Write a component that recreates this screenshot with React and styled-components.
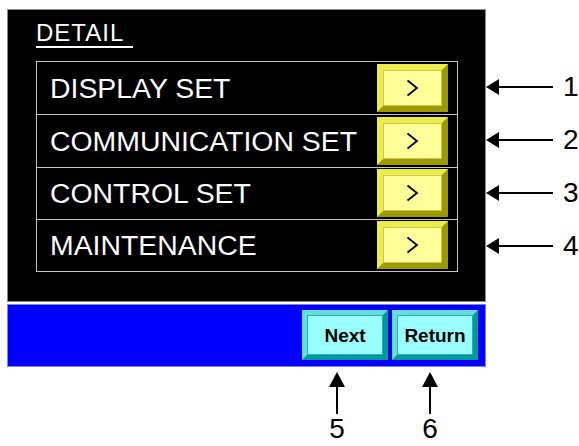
import React from "react";
import styled, { createGlobalStyle } from "styled-components";

const Global = createGlobalStyle`
  html, body {
    margin: 0;
    padding: 0;
    background: #ffffff;
    overflow: hidden;
  }
  body {
    font-family: "Liberation Sans", Arial, sans-serif;
  }
`;

const Page = styled.div`
  padding: 9px 0 0 7px;
  width: 579px;
  height: 446px;
  box-sizing: border-box;
`;

const Top = styled.div`
  display: flex;
  align-items: flex-start;
`;

const Device = styled.div`
  width: 479px;
  display: flex;
  flex-direction: column;
`;

const Screen = styled.div`
  width: 479px;
  height: 293px;
  box-sizing: border-box;
  border: 1px solid #8a8a8a;
  background: #000000;
  padding: 11px 0 0 28px;
`;

const TitleWrap = styled.div`
  display: block;
`;

const Title = styled.span`
  display: inline-block;
  color: #ffffff;
  font-size: 24px;
  line-height: 24px;
  letter-spacing: 1px;
  padding: 0 9px 1px 0;
  border-bottom: 2px solid #ffffff;
`;

const Menu = styled.div`
  margin-top: 13px;
  width: 422px;
  height: 211px;
  box-sizing: border-box;
  border: 1px solid #c4c4c4;
  display: grid;
  grid-template-rows: repeat(4, 1fr);
`;

const Row = styled.div`
  display: flex;
  align-items: center;
  justify-content: space-between;
  padding: 0 9px 0 13px;
  & + & {
    border-top: 1px solid #c4c4c4;
  }
`;

const Label = styled.span`
  color: #ffffff;
  font-size: 28.4px;
  line-height: 28px;
  white-space: nowrap;
`;

const ArrowButton = styled.div`
  width: 71px;
  height: 48px;
  box-sizing: border-box;
  border: 6px solid;
  border-color: #ecec4c #9c9a00 #9c9a00 #ecec4c;
  background: #ffff99;
  box-shadow: inset 0 0 0 1px #c9c950;
  display: flex;
  align-items: center;
  justify-content: center;
`;

const Bar = styled.div`
  margin-top: 2px;
  width: 479px;
  height: 63px;
  box-sizing: border-box;
  border: 1px solid #8080ff;
  background: #0000ff;
  display: flex;
  justify-content: flex-end;
  align-items: flex-start;
  gap: 4px;
  padding: 5px 7px 0 0;
`;

const NavButton = styled.div`
  width: 86px;
  height: 50px;
  box-sizing: border-box;
  border: 5px solid;
  border-color: #66dcdc #009999 #009999 #66dcdc;
  background: #99ffff;
  box-shadow: inset 0 0 0 1px #2fb0b0;
  display: flex;
  align-items: center;
  justify-content: center;
  color: #000000;
  font-weight: bold;
  font-size: 19px;
  line-height: 19px;
`;

const SideNotes = styled.div`
  padding-top: 52px;
  display: flex;
  flex-direction: column;
`;

const SideNote = styled.div`
  height: 52.75px;
  display: flex;
  align-items: center;
`;

const Num = styled.span`
  color: #000000;
  font-size: 28px;
  line-height: 28px;
  margin-left: ${(p) => p.$gap || 0}px;
`;

const BottomNotes = styled.div`
  display: flex;
  padding-left: 315px;
  gap: 63px;
  margin-top: 5px;
`;

const BottomNote = styled.div`
  width: 30px;
  display: flex;
  flex-direction: column;
  align-items: center;
`;

const BottomNum = styled(Num)`
  margin-top: 4px;
  line-height: 22px;
`;

const Chevron = () => (
  <svg width="13" height="18" viewBox="0 0 13 18">
    <polyline
      points="1.5,1.5 11,9 1.5,16.5"
      fill="none"
      stroke="#000"
      strokeWidth="1.8"
    />
  </svg>
);

const LeftArrow = () => (
  <svg width="67" height="16" viewBox="0 0 67 16">
    <polygon points="0,8 13,0 13,16" fill="#000" />
    <line x1="12" y1="8" x2="67" y2="8" stroke="#000" strokeWidth="2" />
  </svg>
);

const UpArrow = () => (
  <svg width="16" height="42" viewBox="0 0 16 42">
    <polygon points="8,0 0,15 16,15" fill="#000" />
    <line x1="8" y1="14" x2="8" y2="42" stroke="#000" strokeWidth="2" />
  </svg>
);

const items = ["DISPLAY SET", "COMMUNICATION SET", "CONTROL SET", "MAINTENANCE"];

export default function App() {
  return (
    <>
      <Global />
      <Page>
        <Top>
          <Device>
            <Screen>
              <TitleWrap>
                <Title>DETAIL</Title>
              </TitleWrap>
              <Menu>
                {items.map((t) => (
                  <Row key={t}>
                    <Label>{t}</Label>
                    <ArrowButton>
                      <Chevron />
                    </ArrowButton>
                  </Row>
                ))}
              </Menu>
            </Screen>
            <Bar>
              <NavButton>Next</NavButton>
              <NavButton>Return</NavButton>
            </Bar>
          </Device>
          <SideNotes>
            {[1, 2, 3, 4].map((n) => (
              <SideNote key={n}>
                <LeftArrow />
                <Num $gap={10}>{n}</Num>
              </SideNote>
            ))}
          </SideNotes>
        </Top>
        <BottomNotes>
          {[5, 6].map((n) => (
            <BottomNote key={n}>
              <UpArrow />
              <BottomNum>{n}</BottomNum>
            </BottomNote>
          ))}
        </BottomNotes>
      </Page>
    </>
  );
}
